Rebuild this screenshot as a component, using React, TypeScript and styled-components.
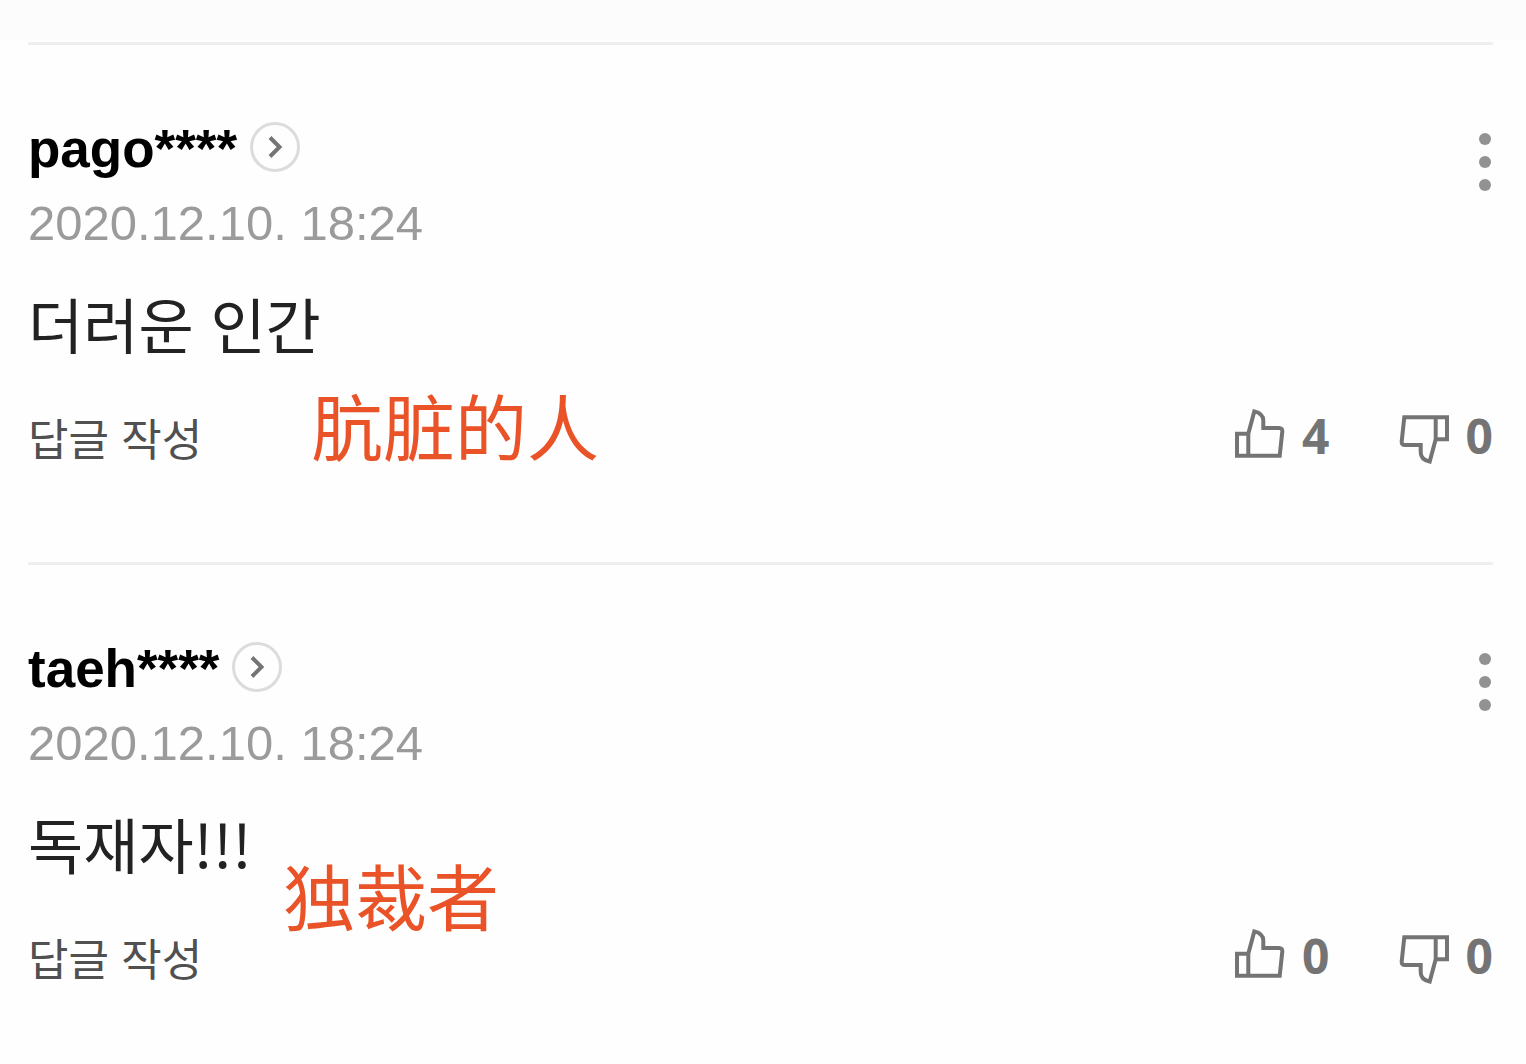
import React from "react";
import styled, { createGlobalStyle } from "styled-components";

const GlobalStyle = createGlobalStyle`
  * { box-sizing: border-box; }
  body {
    margin: 0;
    background: #fefefe;
    font-family: "Liberation Sans", "Noto Sans CJK KR", sans-serif;
  }
  button {
    margin: 0;
    padding: 0;
    border: 0;
    background: none;
    font: inherit;
    color: inherit;
    cursor: pointer;
  }
  svg { display: block; }
`;

const TopStrip = styled.div`
  height: 42px;
  background: linear-gradient(#fcfcfc 40px, #fefefe 40px);
`;

const List = styled.ul`
  list-style: none;
  margin: 0;
  padding: 0 33px 0 28px;
`;

const Item = styled.li`
  position: relative;
  border-top: 3px solid #efefef;
  padding: 74px 0 97px;
`;

const Header = styled.header`
  display: flex;
  justify-content: space-between;
  align-items: flex-start;
`;

const Author = styled.div`
  display: flex;
  align-items: flex-start;
  gap: 13px;
`;

const Name = styled.strong`
  font-size: 53px;
  line-height: 60px;
  font-weight: 700;
  color: #000;
`;

const ProfileButton = styled.button`
  display: flex;
  align-items: center;
  justify-content: center;
  width: 50px;
  height: 50px;
  margin-top: 3px;
  border: 3px solid #dcdcdc;
  border-radius: 50%;
`;

const PostedAt = styled.time`
  display: block;
  margin-top: 16px;
  font-size: 49px;
  line-height: 56px;
  color: #9b9b9b;
`;

const MenuButton = styled.button`
  margin-top: 13px;
`;

const Content = styled.p`
  margin: 36px 0 50px;
  font-family: "Noto Sans CJK KR", sans-serif;
  font-size: 60px;
  line-height: 72px;
  color: #222;
`;

const Footer = styled.footer`
  display: flex;
  justify-content: space-between;
  align-items: flex-start;
`;

const ReplyButton = styled.button`
  && {
    font-family: "Noto Sans CJK KR", sans-serif;
    font-size: 44px;
    line-height: 56px;
    color: #505050;
  }
`;

const Votes = styled.div`
  display: flex;
  gap: 69px;
`;

const VoteButton = styled.button`
  && {
    display: flex;
    align-items: flex-start;
    gap: 17px;
    font-family: "Noto Sans", sans-serif;
    font-size: 48px;
    line-height: 54px;
    font-weight: 700;
    color: #747474;
  }
`;

const VoteIcon = styled.svg<{ $down?: boolean }>`
  margin-top: ${(p) => (p.$down ? 5 : 0)}px;
  rotate: ${(p) => (p.$down ? 180 : 0)}deg;
`;

const Translation = styled.span<{ $top: number; $left: number }>`
  position: absolute;
  top: ${(p) => p.$top}px;
  left: ${(p) => p.$left}px;
  font-family: "Noto Sans CJK SC", sans-serif;
  font-size: 72px;
  line-height: 72px;
  white-space: nowrap;
  color: #ea5328;
`;

function Thumb({ down }: { down?: boolean }) {
  return (
    <VoteIcon $down={down} width="50" height="50" viewBox="0 0 50 50" fill="none" stroke="currentColor" strokeWidth="4" aria-hidden="true">
      <path d="M13.3 24.7H2V46.7H44.7L47.3 22.5Q47.5 19 44 19H28.3V11.5Q28.3 4.5 19.3 2.4L13.3 24.7V46.7" />
    </VoteIcon>
  );
}

interface Comment {
  name: string;
  date: string;
  text: string;
  up: number;
  down: number;
  translation: string;
  top: number;
  left: number;
}

const comments: Comment[] = [
  { name: "pago****", date: "2020.12.10. 18:24", text: "더러운 인간", up: 4, down: 0, translation: "肮脏的人", top: 343, left: 283 },
  { name: "taeh****", date: "2020.12.10. 18:24", text: "독재자!!!", up: 0, down: 0, translation: "独裁者", top: 293, left: 255 },
];

export default function App() {
  return (
    <>
      <GlobalStyle />
      <TopStrip />
      <List>
        {comments.map((c) => (
          <Item key={c.name}>
            <Header>
              <div>
                <Author>
                  <Name>{c.name}</Name>
                  <ProfileButton aria-label="프로필 보기">
                    <svg width="16" height="24" viewBox="0 0 16 24" fill="none" stroke="#747474" strokeWidth="4">
                      <path d="M3 2.5L12.5 12L3 21.5" />
                    </svg>
                  </ProfileButton>
                </Author>
                <PostedAt>{c.date}</PostedAt>
              </div>
              <MenuButton aria-label="메뉴">
                <svg width="14" height="60" viewBox="0 0 14 60" fill="#929292">
                  <circle cx="6" cy="7" r="6" />
                  <circle cx="6" cy="30" r="6" />
                  <circle cx="6" cy="53" r="6" />
                </svg>
              </MenuButton>
            </Header>
            <Content lang="ko">{c.text}</Content>
            <Footer>
              <ReplyButton lang="ko">답글 작성</ReplyButton>
              <Votes>
                <VoteButton aria-label={`공감 ${c.up}`}>
                  <Thumb />
                  {c.up}
                </VoteButton>
                <VoteButton aria-label={`비공감 ${c.down}`}>
                  <Thumb down />
                  {c.down}
                </VoteButton>
              </Votes>
            </Footer>
            <Translation lang="zh" $top={c.top} $left={c.left}>{c.translation}</Translation>
          </Item>
        ))}
      </List>
    </>
  );
}
